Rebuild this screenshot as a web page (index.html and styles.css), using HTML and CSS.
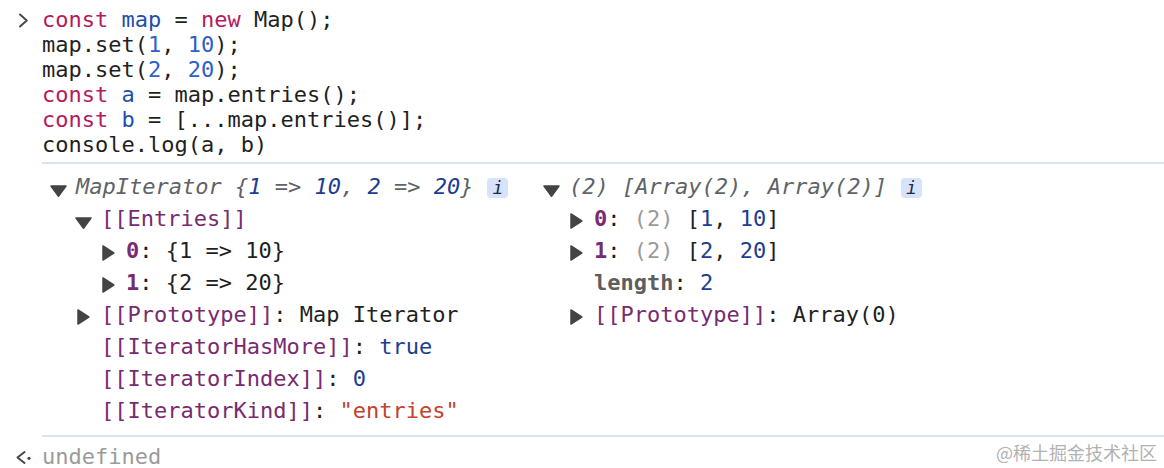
FILE: index.html
```html
<!DOCTYPE html>
<html>
<head>
<meta charset="utf-8">
<link rel="stylesheet" href="styles.css">
</head>
<body>
<div class="console">
  <div class="msg msg-input">
    <div class="gutter">
      <svg class="prompt" width="11" height="15" viewBox="0 0 11 15"><path d="M2 1.5L8.8 7.5L2 13.5" fill="none" stroke="#4a4a4a" stroke-width="2" stroke-linecap="round" stroke-linejoin="round"/></svg>
    </div>
    <div class="body code">
      <div class="line"><span class="kw">const</span> <span class="def">map</span> = <span class="kw">new</span> Map();</div>
      <div class="line">map.set(<span class="num">1</span>, <span class="num">10</span>);</div>
      <div class="line">map.set(<span class="num">2</span>, <span class="num">20</span>);</div>
      <div class="line"><span class="kw">const</span> <span class="def">a</span> = map.entries();</div>
      <div class="line"><span class="kw">const</span> <span class="def">b</span> = [...map.entries()];</div>
      <div class="line">console.log(a, b)</div>
    </div>
  </div>

  <div class="msg msg-output">
    <div class="gutter"></div>
    <div class="body sep objs">
      <div class="tree">
        <div class="row l0">
          <span class="tog"><svg class="tri-down" width="17" height="12" viewBox="0 0 17 12"><path d="M1 1H16L8.5 11.2Z" fill="#444" stroke="#444" stroke-width="1.5" stroke-linejoin="round"/></svg></span>
          <span class="txt it"><span class="g">MapIterator {</span><span class="n">1</span><span class="g"> =&gt; </span><span class="n">10</span><span class="g">, </span><span class="n">2</span><span class="g"> =&gt; </span><span class="n">20</span><span class="g">}</span></span>
          <span class="info">i</span>
        </div>
        <div class="row l1">
          <span class="tog"><svg class="tri-down" width="17" height="12" viewBox="0 0 17 12"><path d="M1 1H16L8.5 11.2Z" fill="#444" stroke="#444" stroke-width="1.5" stroke-linejoin="round"/></svg></span>
          <span class="txt p">[[Entries]]</span>
        </div>
        <div class="row l2">
          <span class="tog"><svg class="tri-right" width="13" height="16" viewBox="0 0 13 16"><path d="M1 1V15L11.8 8Z" fill="#444" stroke="#444" stroke-width="1.5" stroke-linejoin="round"/></svg></span>
          <span class="txt"><b class="p">0</b>: {1 =&gt; 10}</span>
        </div>
        <div class="row l2">
          <span class="tog"><svg class="tri-right" width="13" height="16" viewBox="0 0 13 16"><path d="M1 1V15L11.8 8Z" fill="#444" stroke="#444" stroke-width="1.5" stroke-linejoin="round"/></svg></span>
          <span class="txt"><b class="p">1</b>: {2 =&gt; 20}</span>
        </div>
        <div class="row l1">
          <span class="tog"><svg class="tri-right" width="13" height="16" viewBox="0 0 13 16"><path d="M1 1V15L11.8 8Z" fill="#444" stroke="#444" stroke-width="1.5" stroke-linejoin="round"/></svg></span>
          <span class="txt"><span class="p">[[Prototype]]</span>: Map Iterator</span>
        </div>
        <div class="row l1">
          <span class="tog"></span>
          <span class="txt"><span class="p">[[IteratorHasMore]]</span>: <span class="n">true</span></span>
        </div>
        <div class="row l1">
          <span class="tog"></span>
          <span class="txt"><span class="p">[[IteratorIndex]]</span>: <span class="n">0</span></span>
        </div>
        <div class="row l1">
          <span class="tog"></span>
          <span class="txt"><span class="p">[[IteratorKind]]</span>: <span class="s">"entries"</span></span>
        </div>
      </div>

      <div class="tree">
        <div class="row l0">
          <span class="tog"><svg class="tri-down" width="17" height="12" viewBox="0 0 17 12"><path d="M1 1H16L8.5 11.2Z" fill="#444" stroke="#444" stroke-width="1.5" stroke-linejoin="round"/></svg></span>
          <span class="txt it g">(2) [Array(2), Array(2)]</span>
          <span class="info">i</span>
        </div>
        <div class="row l1">
          <span class="tog"><svg class="tri-right" width="13" height="16" viewBox="0 0 13 16"><path d="M1 1V15L11.8 8Z" fill="#444" stroke="#444" stroke-width="1.5" stroke-linejoin="round"/></svg></span>
          <span class="txt"><b class="p">0</b>: <span class="lg">(2)</span> [<span class="n">1</span>, <span class="n">10</span>]</span>
        </div>
        <div class="row l1">
          <span class="tog"><svg class="tri-right" width="13" height="16" viewBox="0 0 13 16"><path d="M1 1V15L11.8 8Z" fill="#444" stroke="#444" stroke-width="1.5" stroke-linejoin="round"/></svg></span>
          <span class="txt"><b class="p">1</b>: <span class="lg">(2)</span> [<span class="n">2</span>, <span class="n">20</span>]</span>
        </div>
        <div class="row l1">
          <span class="tog"></span>
          <span class="txt"><b class="dim">length</b>: <span class="n">2</span></span>
        </div>
        <div class="row l1">
          <span class="tog"><svg class="tri-right" width="13" height="16" viewBox="0 0 13 16"><path d="M1 1V15L11.8 8Z" fill="#444" stroke="#444" stroke-width="1.5" stroke-linejoin="round"/></svg></span>
          <span class="txt"><span class="p">[[Prototype]]</span>: Array(0)</span>
        </div>
      </div>
    </div>
  </div>

  <div class="msg msg-result">
    <div class="gutter">
      <svg class="ret" width="17" height="15" viewBox="0 0 17 15"><path d="M9.5 2L2.5 7.5L9.5 13" fill="none" stroke="#474747" stroke-width="2" stroke-linecap="round" stroke-linejoin="round"/><circle cx="14" cy="8.3" r="1.6" fill="#474747"/></svg>
    </div>
    <div class="body sep result">undefined</div>
  </div>

  <div class="watermark">@稀土掘金技术社区</div>
</div>
</body>
</html>
```

FILE: styles.css
```css
html, body {
  margin: 0;
  padding: 0;
  background: #ffffff;
  overflow: hidden;
}

.console {
  position: relative;
  width: 1164px;
  height: 468px;
  overflow: hidden;
  font-family: "DejaVu Sans Mono", "Liberation Mono", monospace;
  font-size: 22px;
  color: #1f1f1f;
}

.msg {
  display: grid;
  grid-template-columns: 42px 1fr;
}

.gutter {
  display: flex;
  align-items: flex-start;
}

.prompt {
  display: block;
  margin: 13px 0 0 18px;
}

.ret {
  display: block;
  margin: 15px 0 0 15px;
}

.body.sep {
  border-top: 2px solid #d7e4f4;
}

.code {
  padding: 7px 0 5px;
}

.line {
  height: 25px;
  line-height: 25px;
  white-space: pre;
}

.kw { color: #b41a5c; }
.def { color: #1e4fab; }
.num { color: #2c5ecc; }

.objs {
  display: grid;
  grid-template-columns: 493px auto;
  padding: 7px 0 8px;
}

.row {
  display: flex;
  align-items: flex-start;
  height: 32px;
  line-height: 32px;
  white-space: pre;
}

.l0 { padding-left: 8px; }
.l1 { padding-left: 33px; }
.l2 { padding-left: 58px; }

.tog {
  flex: none;
  width: 26px;
  height: 32px;
}

.tri-down {
  display: block;
  margin-top: 14px;
}

.tri-right {
  display: block;
  margin: 9.5px 0 0 1.5px;
}

.txt { white-space: pre; }

.it { font-style: italic; }
.g { color: #5f6368; }
.n { color: #1c3d91; }
.p { color: #7a2a70; }
b { font-weight: bold; }
.dim { color: #5e5e5e; }
.lg { color: #9a9a9a; }
.s { color: #c4412b; }

.info {
  flex: none;
  width: 21px;
  height: 20px;
  margin: 7px 0 0 14px;
  border-radius: 4px;
  background: #d6e3fb;
  color: #1d2a4a;
  font-style: italic;
  font-size: 18px;
  line-height: 20px;
  text-align: center;
}

.result {
  padding-top: 10px;
  height: 20px;
  line-height: 20px;
  color: #9b9b9b;
}

.watermark {
  position: absolute;
  top: 443px;
  right: 7px;
  font-family: "Noto Sans CJK SC", sans-serif;
  font-size: 18px;
  line-height: 18px;
  color: #b2b2b2;
  white-space: nowrap;
}
```
